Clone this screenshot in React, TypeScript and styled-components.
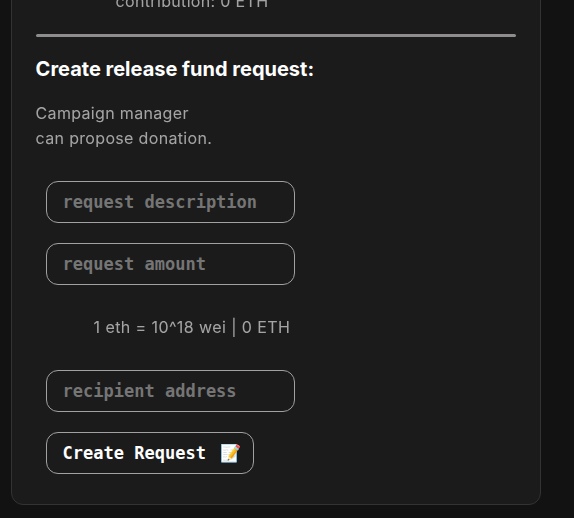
import React from 'react';
import styled, { createGlobalStyle } from 'styled-components';

const Global = createGlobalStyle`
  * { box-sizing: border-box; }
  html, body { margin: 0; height: 100%; background: #121212; overflow: hidden; }
`;
const Page = styled.main`
  height: 518px;
  overflow: hidden;
  display: flex;
  align-items: flex-end;
  padding: 0 0 13px 10.6px;
  font: 400 16px/25px Inter, sans-serif;
  color: #fff;
`;
const Card = styled.section`
  width: 530px;
  height: 545px;
  padding: 0 24px 30px;
  background: #1b1b1b;
  border: 1px solid #333;
  border-radius: 12px;
  display: flex;
  flex-direction: column;
  justify-content: flex-end;
`;
const Muted = styled.p`
  font-weight: 375;
  letter-spacing: 0.33px;
  opacity: 0.6;
  will-change: opacity;
`;
const Contribution = styled(Muted)`margin: 0 0 20px 80px;`;
const Divider = styled.div`height: 3px; background: #8f8c8e; border-radius: 2px;`;
const Title = styled.h2`
  margin: 18px 0 0;
  font-size: 20px;
  line-height: 28px;
  font-weight: 700;
`;
const Intro = styled(Muted)`margin: 18px 0 30px;`;
const Form = styled.form`
  display: flex;
  flex-direction: column;
  align-items: flex-start;
  padding-left: 10px;
  gap: 20px;
`;
const control = `
  height: 42px;
  margin: 0;
  background: #1b1b1b;
  border: 1px solid #a1a1a1;
  border-radius: 12px;
  font: 700 17px "DejaVu Sans Mono", monospace;
  color: #fff;
`;
const Field = styled.input`
  ${control}
  width: 249px;
  padding: 0 16px;
  &::placeholder { color: #757575; opacity: 1; }
`;
const Conversion = styled(Muted)`
  height: 25px;
  margin: 10px 0 10px 48px;
  letter-spacing: 0.41px;
`;
const Submit = styled.button`
  ${control}
  width: 208px;
  padding: 0 11px 0 16px;
  display: flex;
  align-items: center;
  justify-content: space-between;
  white-space: pre;
`;
const Emoji = styled.span`font: 17px "Noto Color Emoji", sans-serif;`;

export default function App() {
  return (
    <>
      <Global />
      <Page>
        <Card>
          <Contribution>contribution: 0 ETH</Contribution>
          <Divider />
          <Title>Create release fund request:</Title>
          <Intro>Campaign manager<br />can propose donation.</Intro>
          <Form>
            <Field placeholder="request description" />
            <Field placeholder="request amount" />
            <Conversion>1 eth = 10^18 wei | 0 ETH</Conversion>
            <Field placeholder="recipient address" />
            <Submit type="button">Create Request <Emoji>📝</Emoji></Submit>
          </Form>
        </Card>
      </Page>
    </>
  );
}
